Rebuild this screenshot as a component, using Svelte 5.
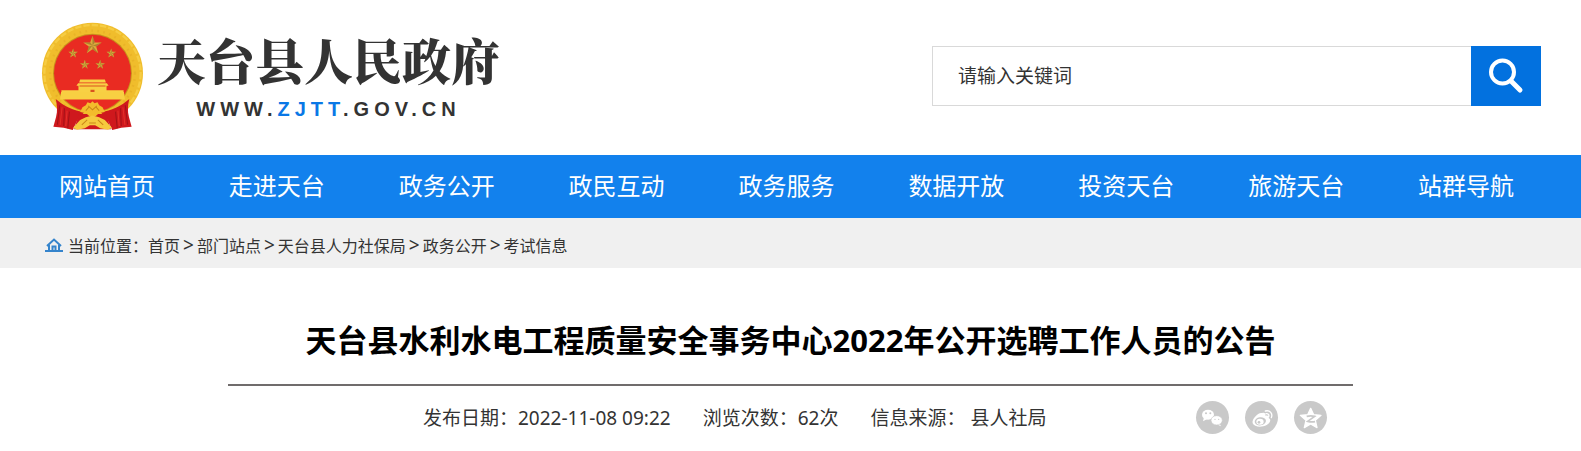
<script lang="ts">
  interface NavLink {
    label: string;
    href: string;
  }

  const navLinks: NavLink[] = [
    { label: "网站首页", href: "#home" },
    { label: "走进天台", href: "#about" },
    { label: "政务公开", href: "#open" },
    { label: "政民互动", href: "#interact" },
    { label: "政务服务", href: "#service" },
    { label: "数据开放", href: "#data" },
    { label: "投资天台", href: "#invest" },
    { label: "旅游天台", href: "#travel" },
    { label: "站群导航", href: "#sites" },
  ];

  const crumbs = ["首页", "部门站点", "天台县人力社保局", "政务公开", "考试信息"];

  let keyword = $state("");

  function handleSearch(e: SubmitEvent) {
    e.preventDefault();
  }
</script>

{#snippet star(x: number, y: number, r: number)}
  <g transform="translate({x} {y}) scale({r})">
    <path fill="#dcab3c" d="M0-1 .24-.31.95-.31.38.12.59.81 0 .4-.59.81-.38.12-.95-.31-.24-.31Z" />
    <path fill="#8a6a28" opacity=".6" d="M0-1 .24-.31 0 0ZM.95-.31.38.12 0 0ZM.59.81 0 .4 0 0ZM-.59.81-.38.12 0 0ZM-.95-.31-.24-.31 0 0Z" />
  </g>
{/snippet}

<header class="header wrap">
  <a class="brand" href="#home">
    <svg class="emblem" viewBox="36 34 308 326" aria-hidden="true">
      <circle cx="190" cy="187" r="151" fill="#f0bd2c" />
      <circle cx="190" cy="187" r="144" fill="none" stroke="#f6cd44" stroke-width="7" stroke-dasharray="19 6" />
      <circle cx="190" cy="187" r="127" fill="none" stroke="#dda01f" stroke-width="7" stroke-dasharray="5 13" opacity=".35" />
      <circle cx="190" cy="187" r="118" fill="#c8901c" />
      <circle cx="190" cy="187" r="115" fill="#e92b22" />
      {@render star(190, 104, 29)}
      {@render star(132, 128, 15)}
      {@render star(246, 128, 15)}
      {@render star(167, 162, 15)}
      {@render star(213, 162, 15)}
      <path fill="#f8d044" d="M153 206h74l3 9h-80ZM147 217h86l5 8h-96ZM148 225h84v13h51v8h-13v5H110v-5H97v-8h51Z" />
      <path fill="#d9531e" d="M151 224h78v3h-78ZM184 237h12v12h-12Z" />
      <path fill="#f8cf42" d="M96 243h188l3 23H93Z" />
      <path fill="#cf181d" d="M80 264c25 22 53 34 86 40l-18 16-17 37-27-7-31-3 8-29c5-18 3-38-1-54ZM300 264c-25 22-53 34-86 40l18 16 17 37 27-7 31-3-8-29c-5-18-3-38 1-54Z" />
      <path fill="none" stroke="#8f1115" stroke-width="3" opacity=".7" d="m92 283-7 58M106 292l-2 53M121 302l-5 50M288 283l7 58M274 292l2 53M259 302l5 50" />
      <path fill="none" stroke="#e3312a" stroke-width="3" d="m99 289-6 53M114 299l-4 46M281 289l6 53M266 299l4 46" />
      <path fill="#cf181d" d="M149 309h82l14 46H135Z" />
      <path fill="#f3bc2c" d="m160 289 10-6 5-9 9 3 6-6 6 6 9-3 5 9 10 6 7 14-18 4-9 8h-20l-9-8-18-4Z" />
      <path fill="#f6c93e" d="m132 350 21-23 17-8 20-5 20 5 17 8 21 23-12 6-23-4-15-9h-16l-15 9-23 4Z" />
      <path fill="none" stroke="#c98518" stroke-width="3" d="m170 299 10-11m-3-3 13 12 13-12m7 14-10-11M158 342l16-15m48 15-16-15m-26 9h20" />
    </svg>
    <span class="brand-text">
      <span class="brand-name">天台县人民政府</span>
      <span class="brand-url">WWW.<em>ZJTT</em>.GOV.CN</span>
    </span>
  </a>

  <form class="search" onsubmit={handleSearch}>
    <input type="text" aria-label="请输入关键词" placeholder="请输入关键词" bind:value={keyword} />
    <button type="submit" aria-label="搜索">
      <svg viewBox="0 0 36 36" aria-hidden="true">
        <circle cx="14.500" cy="14" r="11.500" />
        <path class="handle" d="m23 23 9 9" />
      </svg>
    </button>
  </form>
</header>

<nav class="nav">
  {#each navLinks as link}
    <a href={link.href}>{link.label}</a>
  {/each}
</nav>

<div class="crumb-bar">
  <div class="crumbs wrap">
    <svg class="home" viewBox="0 0 18 14" aria-hidden="true">
      <path d="M0 13h18M2 8l7-6.500 7 6.500M4 7v6M14 7v6M7.500 13V8.500h3V13" />
    </svg>
    <span>当前位置：</span>
    {#each crumbs as crumb, i}
      {#if i > 0}<span class="sep">&gt;</span>{/if}
      <a href="#crumb-{i}">{crumb}</a>
    {/each}
  </div>
</div>

<main class="article">
  <h1>天台县水利水电工程质量安全事务中心2022年公开选聘工作人员的公告</h1>
  <div class="meta">
    <div class="info">
      <span>发布日期：2022-11-08 09:22</span>
      <span>浏览次数：62次</span>
      <span>信息来源： 县人社局</span>
    </div>
    <div class="share">
      <button type="button" aria-label="微信">
        <svg viewBox="0 0 99 99" aria-hidden="true">
          <ellipse cx="36" cy="41" rx="18" ry="15" fill="#fff" />
          <path fill="#fff" d="m24 49-3 12 13-7ZM70 66l5 10-13-6Z" />
          <ellipse cx="62" cy="58" rx="17" ry="14" fill="#fff" stroke="#c9c9c9" stroke-width="2" />
          <g fill="#c9c9c9">
            <circle cx="30" cy="37" r="3" />
            <circle cx="43" cy="37" r="3" />
            <circle cx="57" cy="55" r="2" />
            <circle cx="68" cy="55" r="2" />
          </g>
        </svg>
      </button>
      <button type="button" aria-label="微博">
        <svg viewBox="0 0 99 99" aria-hidden="true">
          <path fill="#fff" d="M46 39c8-6 18-4 15 5 8-2 13 2 10 7 10 5 3 16-6 21-14 8-37 7-42-5-4-13 18-34 27-31 4 1 1 6-4 3Z" />
          <ellipse cx="46" cy="61" rx="17" ry="12" fill="#c9c9c9" transform="rotate(-8 46 61)" />
          <ellipse cx="45" cy="62" rx="11" ry="9" fill="#fff" />
          <circle cx="42" cy="64" r="4" fill="#c9c9c9" />
          <path fill="none" stroke="#fff" stroke-width="4" stroke-linecap="round" d="M61 30c14-4 23 8 18 20M63 38c7-1 10 4 8 9" />
        </svg>
      </button>
      <button type="button" aria-label="QQ空间">
        <svg viewBox="0 0 99 99" aria-hidden="true">
          <path fill="#fff" stroke="#fff" stroke-width="4" stroke-linejoin="round" d="m50 22 9 19 22 2-17 15 5 22-19-11-19 11 5-22-17-15 22-2Z" />
          <path fill="none" stroke="#c9c9c9" stroke-width="5" d="M38 46c8-2 16-2 24 0L41 61c8 2 15 2 22 1" />
        </svg>
      </button>
    </div>
  </div>
</main>

<style>
  :global(body) {
    background: #fff;
    color: #333;
    font-family: "Noto Sans", "Noto Sans CJK SC", sans-serif;
    font-size: 19px;
  }

  a {
    color: inherit;
    text-decoration: none;
  }

  .wrap {
    box-sizing: border-box;
    max-width: 1501px;
    margin: 0 auto;
  }

  .header {
    display: flex;
    align-items: center;
    justify-content: space-between;
    height: 155px;
  }

  .brand {
    display: flex;
    align-items: center;
    gap: 13px;
    padding: 0 0 3px 1px;
  }

  .emblem {
    width: 103px;
    height: 109px;
  }

  .brand-text {
    display: flex;
    flex-direction: column;
    align-items: center;
    gap: 10px;
  }

  .brand-name {
    font-family: "Noto Serif CJK SC", "Noto Sans CJK SC", serif;
    font-size: 49px;
    font-weight: 900;
    line-height: 56px;
  }

  .brand-url {
    font-family: "Liberation Sans", sans-serif;
    font-size: 20px;
    font-weight: 700;
    line-height: 24px;
    letter-spacing: 5px;
  }

  .brand-url em {
    color: #0a78e6;
    font-style: normal;
  }

  .search {
    display: flex;
    width: 609px;
    height: 60px;
    margin-bottom: 3px;
  }

  .search input {
    box-sizing: border-box;
    flex: 1;
    min-width: 0;
    padding: 0 25px;
    border: 1px solid #d9d9d9;
    border-right: none;
    outline: none;
    color: #333;
    font: inherit;
  }

  .search input::placeholder {
    color: #333;
    opacity: 1;
  }

  .search button {
    display: flex;
    align-items: center;
    justify-content: center;
    width: 70px;
    padding: 0;
    border: none;
    background: #0271df;
    cursor: pointer;
  }

  .search svg {
    width: 36px;
    height: 36px;
    fill: none;
    stroke: #fff;
    stroke-width: 4;
    stroke-linecap: round;
  }

  .search .handle {
    stroke-width: 5;
  }

  .nav {
    display: grid;
    grid-template-columns: repeat(9, 1fr);
    padding: 0 30px 1px 22px;
    background: #1281ed;
    color: #fff;
    font-size: 24px;
    line-height: 62px;
    text-align: center;
  }

  .crumb-bar {
    background: #f0f0f0;
  }

  .crumbs {
    display: flex;
    align-items: center;
    height: 50px;
    padding: 3px 5px 0;
    font-size: 16px;
  }

  .home {
    width: 18px;
    height: 14px;
    margin-right: 5px;
    fill: none;
    stroke: #3584cc;
    stroke-width: 2;
  }

  .sep {
    padding: 0 3px;
    font-size: 19px;
  }

  .article {
    max-width: 1125px;
    margin: 0 auto;
  }

  h1 {
    margin: 0;
    padding: 48px 0 20px;
    border-bottom: 2px solid #706c6c;
    color: #000;
    font-size: 31px;
    font-weight: 700;
    line-height: 48px;
    text-align: center;
    white-space: nowrap;
  }

  .meta {
    display: flex;
    align-items: center;
    justify-content: space-between;
    padding: 15px 26px 0 195px;
  }

  .info {
    display: flex;
    gap: 32px;
    line-height: 28px;
  }

  .share {
    display: flex;
    gap: 16px;
  }

  .share button {
    width: 33px;
    height: 33px;
    padding: 0;
    border: none;
    border-radius: 50%;
    background: #c9c9c9;
    cursor: pointer;
  }

  .share svg {
    display: block;
    width: 33px;
    height: 33px;
  }
</style>
